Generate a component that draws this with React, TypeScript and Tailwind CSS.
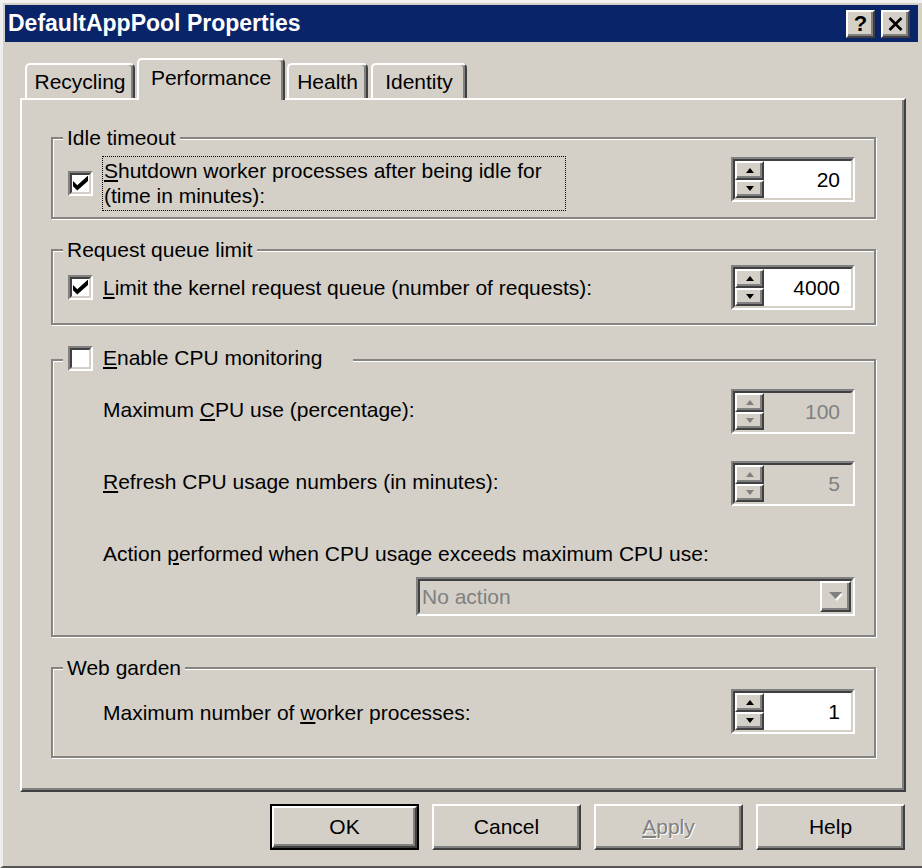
import React from "react";

const raised =
  "border-2 border-t-white border-l-white border-r-[#404040] border-b-[#404040] shadow-[inset_-2px_-2px_0_#808080]";

function CheckBox({ checked }: { checked?: boolean }) {
  return (
    <div className="w-[25px] h-[25px] shrink-0 border-2 border-t-[#808080] border-l-[#808080] border-r-white border-b-white">
      <div className="w-full h-full bg-white border-2 border-t-[#404040] border-l-[#404040] border-r-[#d4d0c8] border-b-[#d4d0c8] flex items-center justify-center">
        {checked && (
          <svg width="15" height="15" viewBox="0 0 7 7">
            <path d="M0 2.3 L2 4.3 L7 -0.2 L7 2.3 L2 6.8 L0 4.8 Z" fill="#000" />
          </svg>
        )}
      </div>
    </div>
  );
}

function Arrow({ up, disabled }: { up?: boolean; disabled?: boolean }) {
  return (
    <svg width="8" height="5" viewBox="0 0 8 5">
      <path
        d={up ? "M4 0 L8 5 L0 5 Z" : "M0 0 L8 0 L4 5 Z"}
        fill={disabled ? "#808080" : "#000"}
      />
    </svg>
  );
}

function Spinner({ value, disabled }: { value: string; disabled?: boolean }) {
  return (
    <div className="w-[124px] h-[45px] shrink-0 border-2 border-t-[#808080] border-l-[#808080] border-r-white border-b-white">
      <div className="w-full h-full flex border-2 border-t-[#404040] border-l-[#404040] border-r-[#d4d0c8] border-b-[#d4d0c8]">
        <div className="w-[29px] h-full flex flex-col">
          <div className={`flex-1 bg-[#d4d0c8] flex items-center justify-center ${raised}`}>
            <Arrow up disabled={disabled} />
          </div>
          <div className={`flex-1 bg-[#d4d0c8] flex items-center justify-center ${raised}`}>
            <Arrow disabled={disabled} />
          </div>
        </div>
        <div
          className={
            disabled
              ? "flex-1 bg-[#d4d0c8] text-[#808080] flex items-center justify-end pr-[11px] text-[21px]"
              : "flex-1 bg-white text-black flex items-center justify-end pr-[11px] text-[21px]"
          }
        >
          {value}
        </div>
      </div>
    </div>
  );
}

function Combo() {
  return (
    <div className="w-[439px] h-[39px] border-2 border-t-[#808080] border-l-[#808080] border-r-white border-b-white">
      <div className="w-full h-full flex items-center bg-[#d4d0c8] border-2 border-t-[#404040] border-l-[#404040] border-r-[#d4d0c8] border-b-[#d4d0c8]">
        <span className="flex-1 pl-[2px] text-[21px] text-[#808080]">No action</span>
        <div className={`w-[31px] h-full bg-[#d4d0c8] flex items-center justify-center ${raised}`}>
          <svg width="14" height="9" viewBox="0 0 14 9">
            <path d="M1 1 L13 1 L7 8 Z" fill="#fff" transform="translate(1 1)" />
            <path d="M0 0 L13 0 L6.5 7 Z" fill="#808080" />
          </svg>
        </div>
      </div>
    </div>
  );
}

function Btn({ children, def }: { children: React.ReactNode; def?: boolean }) {
  return (
    <div className={def ? "w-[149px] h-[46px] border-2 border-black" : "w-[149px] h-[46px]"}>
      <div className={`w-full h-full bg-[#d4d0c8] flex items-center justify-center text-[21px] ${raised}`}>
        {children}
      </div>
    </div>
  );
}

function Legend({ children }: { children: React.ReactNode }) {
  return (
    <div className="absolute -top-[13px] left-[10px] px-[4px] bg-[#d4d0c8] leading-[24px] text-[21px]">
      {children}
    </div>
  );
}

const groupCls =
  "relative w-[825px] ml-[29px] border-2 border-[#858480] shadow-[inset_1px_1px_0_#fff,1px_1px_0_#fff]";

export default function App() {
  return (
    <div className="w-[922px] h-[868px] bg-[#d4d0c8] border-t-[3px] border-t-[#f1f0ee] border-l-[3px] border-l-[#eeeeee] border-b-2 border-b-[#555555] flex flex-col font-['Liberation_Sans',Arial,sans-serif] text-black overflow-hidden">
      {/* Title bar */}
      <div className="ml-[2px] mr-[4px] mt-[2px] h-[37px] shrink-0 bg-[#0a246a] flex items-center justify-between pl-[3px] pr-[8px]">
        <span className="text-white font-bold text-[23px] leading-none">DefaultAppPool Properties</span>
        <div className="flex gap-[6px]">
          <div className={`w-[29px] h-[28px] bg-[#d4d0c8] flex items-center justify-center font-bold text-[22px] leading-none ${raised}`}>
            ?
          </div>
          <div className={`w-[29px] h-[28px] bg-[#d4d0c8] flex items-center justify-center ${raised}`}>
            <svg width="15" height="14" viewBox="0 0 15 14">
              <path d="M1.5 1 L13.5 13 M13.5 1 L1.5 13" stroke="#000" strokeWidth="2.6" />
            </svg>
          </div>
        </div>
      </div>

      {/* Tabs */}
      <div className="relative z-10 flex items-end h-[40px] mt-[16px] ml-[17px] pl-[5px] shrink-0 text-[21px]">
        <div className="w-[110px] h-[35px] border-t-2 border-l-2 border-t-white border-l-white border-r-2 border-r-[#404040] rounded-t-[5px] shadow-[inset_-2px_0_0_#808080] flex items-center justify-center">
          Recycling
        </div>
        <div className="ml-[2px] w-[148px] h-[42px] -mb-[2px] bg-[#d4d0c8] border-t-2 border-l-2 border-t-white border-l-white border-r-2 border-r-[#404040] rounded-t-[5px] shadow-[inset_-2px_0_0_#808080] flex items-center justify-center pb-[4px]">
          Performance
        </div>
        <div className="ml-[2px] w-[81px] h-[35px] border-t-2 border-l-2 border-t-white border-l-white border-r-2 border-r-[#404040] rounded-t-[5px] shadow-[inset_-2px_0_0_#808080] flex items-center justify-center">
          Health
        </div>
        <div className="ml-[3px] w-[96px] h-[35px] border-t-2 border-l-2 border-t-white border-l-white border-r-2 border-r-[#404040] rounded-t-[5px] shadow-[inset_-2px_0_0_#808080] flex items-center justify-center">
          Identity
        </div>
      </div>

      {/* Panel */}
      <div className="ml-[17px] w-[886px] h-[694px] shrink-0 border-2 border-t-white border-l-white border-r-[#404040] border-b-[#404040] shadow-[inset_-2px_-2px_0_#808080] flex flex-col text-[21px]">
        {/* Idle timeout */}
        <div className={`${groupCls} h-[82px] mt-[37px]`}>
          <Legend>Idle timeout</Legend>
          <div className="flex items-center justify-between pl-[15px] pr-[19px] pt-[17px]">
            <div className="flex items-center">
              <CheckBox checked />
              <div className="ml-[9px] w-[464px] h-[55px] border border-dotted border-black pl-[1px] pt-[1px] leading-[25px]">
                <div>
                  <u className="underline-offset-[2px]">S</u>hutdown worker processes after being idle for
                </div>
                <div>(time in minutes):</div>
              </div>
            </div>
            <div className="self-start mt-[1px]">
              <Spinner value="20" />
            </div>
          </div>
        </div>

        {/* Request queue limit */}
        <div className={`${groupCls} h-[76px] mt-[30px]`}>
          <Legend>Request queue limit</Legend>
          <div className="flex items-center justify-between pl-[15px] pr-[19px] pt-[14px]">
            <div className="flex items-center">
              <CheckBox checked />
              <span className="ml-[10px]">
                <u className="underline-offset-[2px]">L</u>imit the kernel request queue (number of requests):
              </span>
            </div>
            <Spinner value="4000" />
          </div>
        </div>

        {/* CPU monitoring */}
        <div className={`${groupCls} h-[278px] mt-[34px]`}>
          <div className="absolute -top-[16px] left-[10px] w-[290px] h-[26px] pl-[5px] bg-[#d4d0c8] flex items-center">
            <CheckBox />
            <span className="ml-[10px] leading-[24px]">
              <u className="underline-offset-[2px]">E</u>nable CPU monitoring
            </span>
          </div>
          <div className="flex flex-col pl-[50px] pr-[19px] pt-[28px]">
            <div className="flex items-center justify-between">
              <span className="mb-[4px]">
                Maximum <u className="underline-offset-[2px]">C</u>PU use (percentage):
              </span>
              <Spinner value="100" disabled />
            </div>
            <div className="flex items-center justify-between mt-[27px]">
              <span className="mb-[4px]">
                <u className="underline-offset-[2px]">R</u>efresh CPU usage numbers (in minutes):
              </span>
              <Spinner value="5" disabled />
            </div>
            <div className="mt-[36px] leading-[24px]">
              Action <u className="underline-offset-[2px]">p</u>erformed when CPU usage exceeds maximum CPU use:
            </div>
            <div className="flex justify-end mt-[11px]">
              <Combo />
            </div>
          </div>
        </div>

        {/* Web garden */}
        <div className={`${groupCls} h-[91px] mt-[30px]`}>
          <Legend>Web garden</Legend>
          <div className="flex items-center justify-between pl-[50px] pr-[19px] pt-[20px]">
            <span className="mt-[3px]">
              Maximum number of <u className="underline-offset-[2px]">w</u>orker processes:
            </span>
            <Spinner value="1" />
          </div>
        </div>
      </div>

      {/* Buttons */}
      <div className="flex justify-end gap-[13px] pr-[17px] mt-[12px]">
        <Btn def>OK</Btn>
        <Btn>Cancel</Btn>
        <Btn>
          <span className="text-[#808080] [text-shadow:1px_1px_0_#fff]">
            <u className="underline-offset-[2px]">A</u>pply
          </span>
        </Btn>
        <Btn>Help</Btn>
      </div>
    </div>
  );
}
